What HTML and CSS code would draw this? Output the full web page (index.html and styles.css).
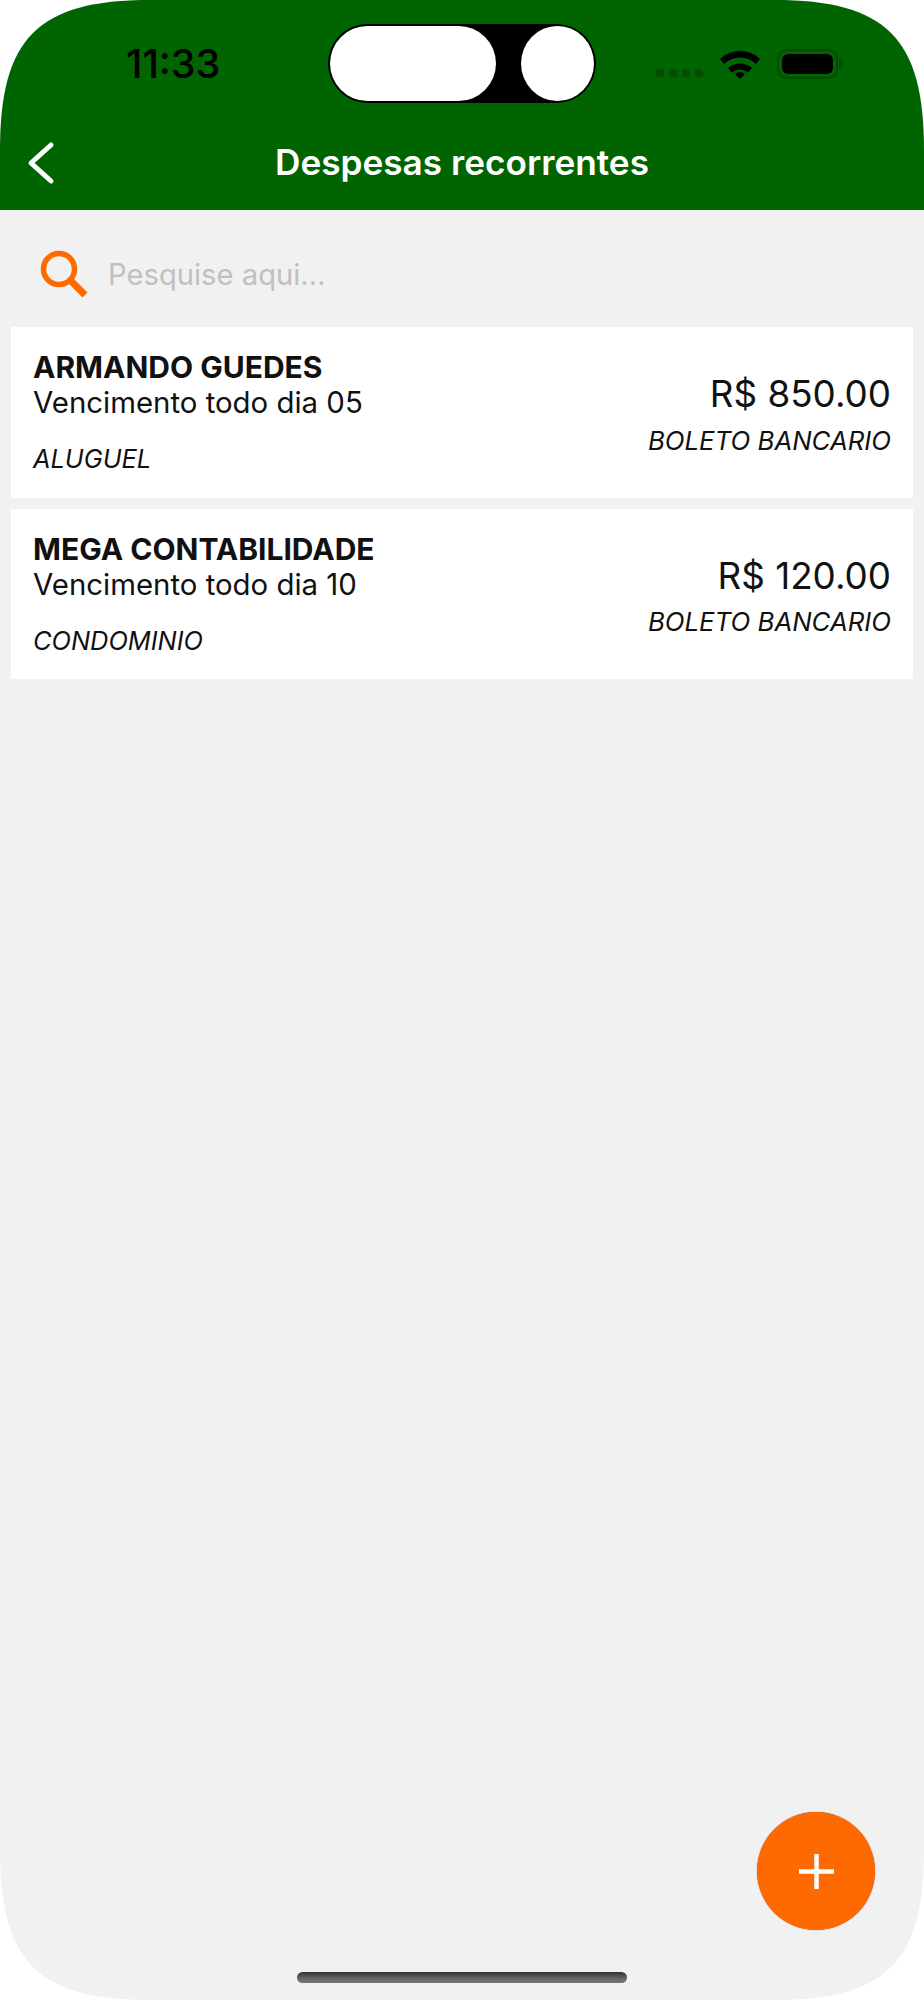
FILE: index.html
```html
<!DOCTYPE html>
<html lang="en">
<head>
    <meta charset="UTF-8">
    <meta name="viewport" content="width=device-width, initial-scale=1.0">
    <title>Despesas recorrentes</title>
    <link rel="stylesheet" href="styles.css">
</head>
<body>
    <div class="phone">
        <header class="header">
            <div class="status">
                <span class="time">11:33</span>
                <div class="island">
                    <div class="island-pill"></div>
                    <div class="island-dot"></div>
                </div>
                <div class="status-icons">
                    <div class="signal"><i></i><i></i><i></i><i></i></div>
                    <svg class="wifi" width="42" height="30" viewBox="0 0 42 30">
                        <path d="M1 10 A29 29 0 0 1 41 10 L37 15 A23 23 0 0 0 5 15 Z" fill="#000"/>
                        <path d="M9 19 A18 18 0 0 1 33 19 L29 23.5 A12 12 0 0 0 13 23.5 Z" fill="#000"/>
                        <path d="M16 25 A7 7 0 0 1 26 25 L21 30 Z" fill="#000"/>
                    </svg>
                    <div class="battery"><div class="battery-fill"></div></div>
                    <div class="battery-nub"></div>
                </div>
            </div>
            <div class="title-bar">
                <svg class="back" width="30" height="44" viewBox="0 0 30 44">
                    <path d="M25 4 L5 22 L25 40" fill="none" stroke="#fff" stroke-width="5" stroke-linecap="round" stroke-linejoin="round"/>
                </svg>
                <h1 class="title">Despesas recorrentes</h1>
            </div>
        </header>

        <div class="search">
            <svg class="search-icon" width="50" height="50" viewBox="0 0 50 50">
                <circle cx="20" cy="19" r="15.5" fill="none" stroke="#ff6a00" stroke-width="5.5"/>
                <path d="M31 30 L46 45" fill="none" stroke="#ff6a00" stroke-width="7"/>
            </svg>
            <span class="placeholder">Pesquise aqui...</span>
        </div>

        <div class="list">
            <div class="card">
                <div class="card-left">
                    <div class="name">ARMANDO GUEDES</div>
                    <div class="due">Vencimento todo dia 05</div>
                    <div class="category">ALUGUEL</div>
                </div>
                <div class="card-right">
                    <div class="price">R$ 850.00</div>
                    <div class="method">BOLETO BANCARIO</div>
                </div>
            </div>
            <div class="card">
                <div class="card-left">
                    <div class="name">MEGA CONTABILIDADE</div>
                    <div class="due">Vencimento todo dia 10</div>
                    <div class="category">CONDOMINIO</div>
                </div>
                <div class="card-right">
                    <div class="price">R$ 120.00</div>
                    <div class="method">BOLETO BANCARIO</div>
                </div>
            </div>
        </div>

        <button class="fab" type="button">
            <svg width="35" height="35" viewBox="0 0 35 35">
                <path d="M17.5 0 V35 M0 17.5 H35" stroke="#fff" stroke-width="4.5"/>
            </svg>
        </button>
        <div class="home-bar"></div>
    </div>
</body>
</html>
```

FILE: styles.css
```css
html, body {
    margin: 0;
    padding: 0;
    background-color: #fff;
}
body {
    font-family: Inter, "Liberation Sans", sans-serif;
    color: #111;
}
.phone {
    position: relative;
    width: 924px;
    height: 2000px;
    overflow: hidden;
    background-color: #f1f1f1;
    /* squircle corners, plain border-radius comes out too round */
    clip-path: path("M150 0 H774 C886 0 924 38 924 150 V1850 C924 1962 886 2000 774 2000 H150 C38 2000 0 1962 0 1850 V150 C0 38 38 0 150 0 Z");
}
.header {
    height: 210px;
    background-color: #006400;
    box-sizing: border-box;
    padding-top: 24px;
}
.status {
    display: flex;
    align-items: center;
    height: 79px;
}
.time {
    width: 328px;
    box-sizing: border-box;
    padding-left: 126px;
    font-size: 39.5px;
    font-weight: 500;
    color: #000;
}
.island {
    display: flex;
    justify-content: space-between;
    align-items: center;
    width: 268px;
    height: 79px;
    box-sizing: border-box;
    padding: 2px;
    background-color: #000;
    border-radius: 40px;
}
.island-pill {
    width: 166px;
    height: 75px;
    background-color: #fff;
    border-radius: 38px;
}
.island-dot {
    width: 73px;
    height: 75px;
    background-color: #fff;
    border-radius: 50%;
}
.status-icons {
    display: flex;
    align-items: center;
    padding-left: 60px;
    height: 30px;
}
.signal {
    display: flex;
    gap: 5px;
    margin-top: 18px;
    margin-right: 16px;
}
.signal i {
    display: block;
    width: 8px;
    height: 8px;
    border-radius: 2px;
    background-color: #044d04;
}
.wifi {
    margin-right: 16px;
}
.battery {
    width: 61px;
    height: 30px;
    box-sizing: border-box;
    padding: 3px;
    border: 2px solid #044d04;
    border-radius: 9px;
}
.battery-fill {
    height: 100%;
    background-color: #000;
    border-radius: 6px;
}
.battery-nub {
    width: 4px;
    height: 11px;
    margin-left: 1px;
    background-color: #044d04;
    border-radius: 0 4px 4px 0;
}
.title-bar {
    position: relative;
    display: flex;
    align-items: center;
    justify-content: center;
    margin-top: 29px;
    height: 60px;
}
.back {
    position: absolute;
    left: 26px;
    top: 9px;
}
.title {
    margin: 0;
    font-size: 35.2px;
    font-weight: 600;
    color: #fff;
}
.search {
    display: flex;
    align-items: center;
    height: 117.3px;
    box-sizing: border-box;
    padding-top: 12px;
    padding-left: 39px;
}
.search-icon {
    margin-right: 19px;
}
.placeholder {
    font-size: 29.2px;
    color: #c0c0c0;
}
.list {
    display: flex;
    flex-direction: column;
    gap: 10.8px;
    padding: 0 11px;
}
.card {
    display: flex;
    justify-content: space-between;
    height: 170.5px;
    box-sizing: border-box;
    padding: 23px 22px 0;
    background-color: #fff;
}
.name {
    font-size: 30px;
    font-weight: 700;
    line-height: 35px;
}
.due {
    font-size: 29.4px;
    line-height: 35px;
}
.category {
    margin-top: 24px;
    font-size: 25.4px;
    font-style: italic;
    line-height: 30px;
}
.card-right {
    padding-top: 21px;
    text-align: right;
}
.price {
    font-size: 36.8px;
    line-height: 46px;
}
.method {
    margin-top: 8.5px;
    font-size: 25.8px;
    font-style: italic;
    line-height: 30px;
}
.fab {
    position: absolute;
    left: 757px;
    top: 1812px;
    display: flex;
    align-items: center;
    justify-content: center;
    width: 118px;
    height: 118px;
    padding: 0;
    border: none;
    border-radius: 50%;
    background-color: #ff6a00;
    box-shadow: 0 0 1px #a33;
}
.home-bar {
    position: absolute;
    left: 297px;
    top: 1972px;
    width: 330px;
    height: 11px;
    border-radius: 6px;
    background: linear-gradient(to bottom, #333, #666 60%, #777);
}
```
